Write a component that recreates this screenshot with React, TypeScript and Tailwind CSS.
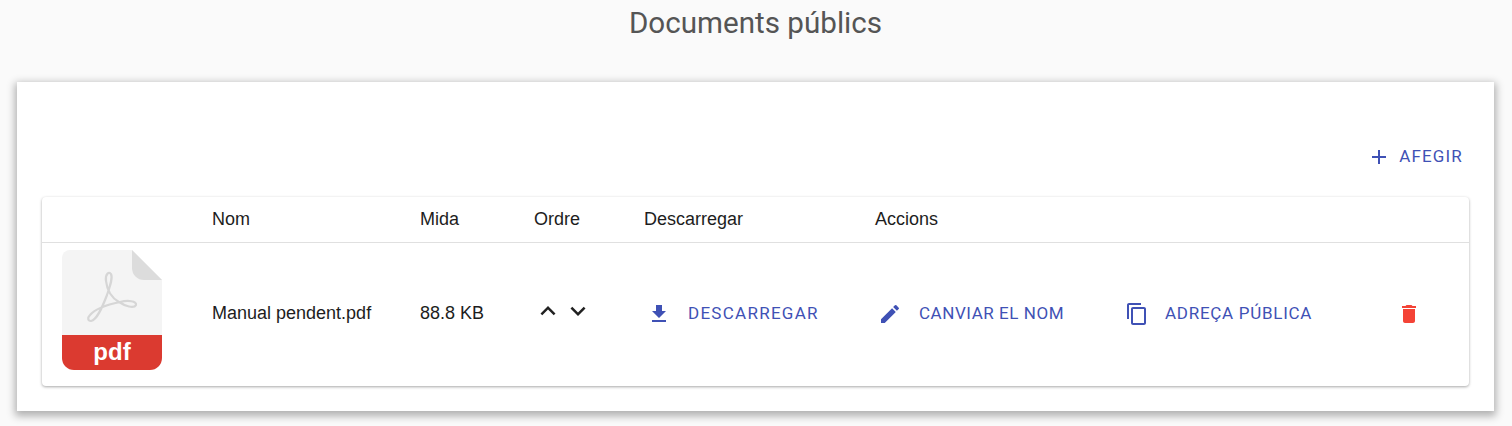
import {
  MdAdd,
  MdContentCopy,
  MdDelete,
  MdEdit,
  MdFileDownload,
  MdKeyboardArrowDown,
  MdKeyboardArrowUp,
} from "react-icons/md";

function PdfIcon() {
  return (
    <svg width="100" height="120" viewBox="0 0 100 120" className="block">
      <path d="M8 0H70L100 30V85H0V8A8 8 0 0 1 8 0Z" fill="#f4f4f4" />
      <path d="M70 0L100 30H82A12 12 0 0 1 70 18Z" fill="#dcdcdc" />
      <path
        d="M0 85H100V108A12 12 0 0 1 88 120H12A12 12 0 0 1 0 108Z"
        fill="#db3a30"
      />
      <path
        d="M29 71C35 70 40 58 45 45C48 36 51 28 49 24C47 21 43 24 44 31C45 40 50 48 57 52C63 56 72 59 74 55C75 51 66 50 58 52C48 54 34 58 28 65C25 68 26 71 29 71Z"
        fill="none"
        stroke="#d6d6d6"
        strokeWidth="2.2"
      />
      <text
        x="50"
        y="110"
        textAnchor="middle"
        fill="#ffffff"
        fontSize="24"
        fontWeight="700"
        fontFamily="'Liberation Sans', sans-serif"
      >
        pdf
      </text>
    </svg>
  );
}

function LinkButton({
  icon,
  label,
  className,
}: {
  icon: React.ReactNode;
  label: string;
  className: string;
}) {
  return (
    <button className={`flex items-center font-['Roboto',sans-serif] text-[17px] leading-6 text-[#3f51b5] uppercase ${className}`}>
      {icon}
      <span className="pb-px">{label}</span>
    </button>
  );
}

export default function App() {
  return (
    <div className="min-h-[426px] bg-[#fafafa] pr-[18px] pl-[17px] pb-[15px] font-['Liberation_Sans',Arial,sans-serif]">
      <h1 className="h-[82px] pt-[5px] text-center font-['Roboto',sans-serif] text-[29.6px] leading-9 font-normal text-[#555555]">
        Documents públics
      </h1>
      <div className="h-[329px] bg-white px-[25px] pt-[56px] shadow-[0_3px_8px_2px_rgba(0,0,0,0.3)]">
        <div className="flex h-[59px] items-start justify-end pt-[6px] pr-[6px]">
          <LinkButton
            className="gap-2 tracking-[1.17px]"
            label="Afegir"
            icon={<MdAdd size={24} />}
          />
        </div>
        <div className="h-[189px] rounded bg-white text-[18px] text-[#1d1d1d] shadow-[0_1px_3px_0_rgba(0,0,0,0.35)]">
          <div className="grid h-[46px] grid-cols-[170px_208px_114px_110px_231px_1fr] items-center border-b border-[#e0e0e0]">
            <span />
            <span>Nom</span>
            <span>Mida</span>
            <span>Ordre</span>
            <span>Descarregar</span>
            <span>Accions</span>
          </div>
          <div className="grid h-[143px] grid-cols-[170px_208px_114px_110px_231px_250px_1fr] items-center">
            <div className="pb-[10px] pl-5">
              <PdfIcon />
            </div>
            <span className="pb-[2px]">Manual pendent.pdf</span>
            <span className="pb-[2px]">88.8 KB</span>
            <div className="-ml-px flex pb-[8px] text-[#212121]">
              <MdKeyboardArrowUp size={30} />
              <MdKeyboardArrowDown size={30} />
            </div>
            <div className="pb-[2px] pl-[3px]">
              <LinkButton
                className="gap-[17px] tracking-[1.27px]"
                label="Descarregar"
                icon={<MdFileDownload size={24} />}
              />
            </div>
            <div className="pb-[2px] pl-[3px]">
              <LinkButton
                className="gap-[17px] tracking-[0.55px]"
                label="Canviar el nom"
                icon={<MdEdit size={24} />}
              />
            </div>
            <div className="flex items-center justify-between pr-[48px] pb-[2px]">
              <LinkButton
                className="gap-4 tracking-[0.72px]"
                label="Adreça pública"
                icon={<MdContentCopy size={24} />}
              />
              <MdDelete size={24} className="text-[#f44336]" />
            </div>
          </div>
        </div>
      </div>
    </div>
  );
}
